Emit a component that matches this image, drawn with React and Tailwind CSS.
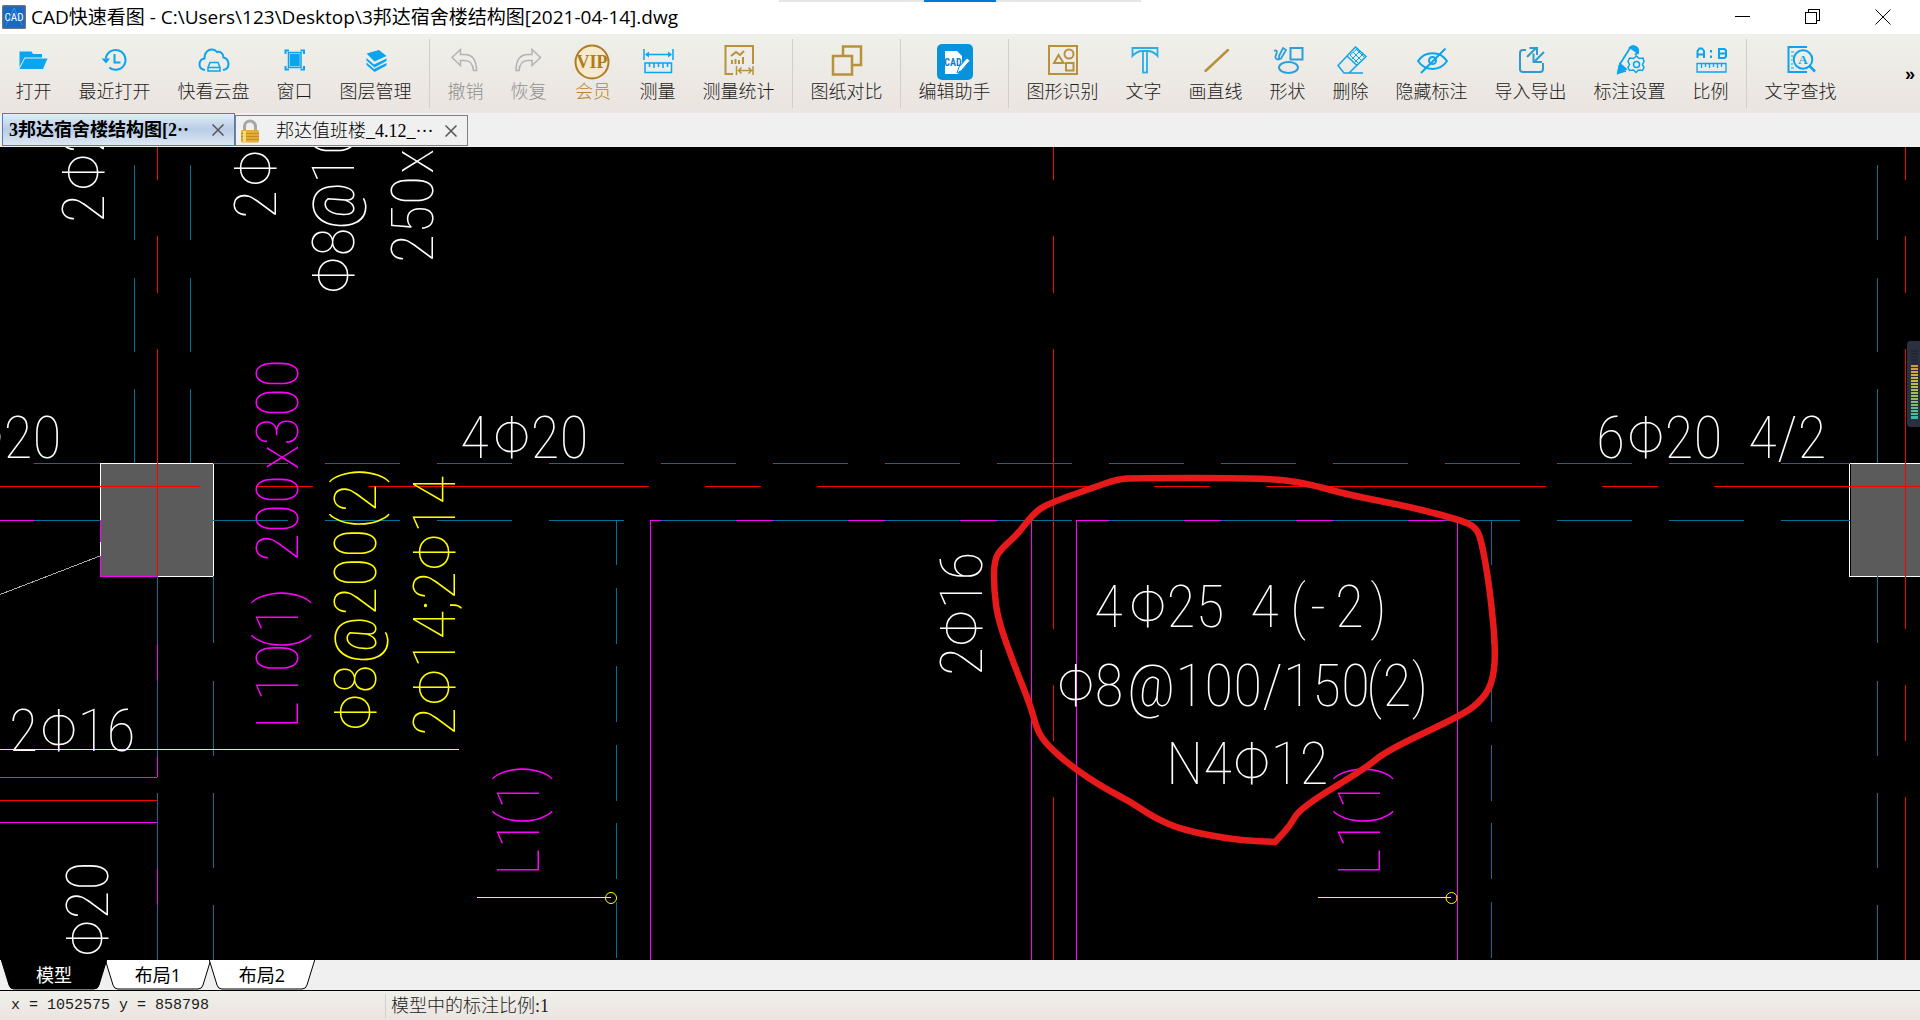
import React, { useState } from "react";

const BLUE = "#0aa5ee";
const GOLD = "#b8923a";

// Toolbar icons, each drawn in a 36x36 box
const icons = {
  open: (
    <g fill={BLUE}>
      <path d="M3.5 25V9.5h12l1.5 2.5h9v3.5H8.5z" />
      <path d="M9 16.5h22.5L27 27H3.5z" />
    </g>
  ),
  recent: (
    <g fill="none" stroke={BLUE} strokeWidth="2">
      <path d="M8.8 16.5a9.9 9.9 0 1 1 3.5 9" />
      <path d="M17.5 12v8.5h6" />
      <path d="M4.5 16.5h8.5l-4 5z" fill={BLUE} stroke="none" />
    </g>
  ),
  cloud: (
    <g fill="none" stroke={BLUE} strokeWidth="2">
      <path d="M9 28C5 27.5 3.5 25 3.5 22.5c0-3 2-5.500 5-6C8.500 10 12.500 7 16.500 7.500c2 .3 3.500 1.200 4.500 2.500 3-1 6.500 1 6.500 5.500 3 .8 5 3.500 5 6.500 0 3-2 5.500-5.500 6" />
      <path d="M14 20.500h8l2 5v3.500H12v-3.500zM12 25.500h12" strokeWidth="1.500" />
    </g>
  ),
  windowIcon: (
    <g fill="none" stroke={BLUE} strokeWidth="1.500">
      <path d="M8.500 12V8.500H12M23.500 8.500H27V12M27 24v3.500h-3.500M12 27.500H8.500V24" strokeWidth="2" />
      <rect x="11.500" y="10.500" width="12.500" height="15" />
      <rect x="13.500" y="12.500" width="8.500" height="11" fill={BLUE} />
    </g>
  ),
  layers: (
    <g fill={BLUE}>
      <path d="M8.500 11.500 21 8l7.500 6-12 5.500z" />
      <path d="m8.500 16 7.500 6.500 12.500-6v2.500L16.500 25.500 8.500 18.500zM8.500 20.500 16 27l12.500-6v2.500L16.500 30 8.500 23z" />
    </g>
  ),
  undo: (
    <path d="M12.500 7.500v5h4c8 0 12 5.500 12 16h-3c-.5-7-3-10-9-10h-4v5l-8.500-8z" fill="none" stroke="#b3b3b3" strokeWidth="1.500" />
  ),
  redo: (
    <path d="M21 7.500v5h-4c-8 0-12 5.500-12 16h3c.5-7 3-10 9-10h4v5l8.500-8z" fill="none" stroke="#b3b3b3" strokeWidth="1.500" />
  ),
  vip: (
    <g>
      <circle cx="17" cy="20" r="16.500" fill="#f5ead0" stroke="#b07c22" strokeWidth="2" />
      <text x="17" y="26" textAnchor="middle" fill="#b07c16" className="font-['Liberation_Serif',serif] text-[18px] font-bold">VIP</text>
    </g>
  ),
  measure: (
    <g fill="none" stroke={BLUE} strokeWidth="1.500">
      <path d="M4 7v11M33 7v11M6 12.500h25" />
      <path d="M5 12.500l4-3v6zM32 12.500l-4-3v6z" fill={BLUE} stroke="none" />
      <rect x="5" y="21" width="26.500" height="9.500" />
      <path d="M9.500 21v4M14 21v5M18.500 21v4M23 21v5M27.500 21v4" />
    </g>
  ),
  measureStat: (
    <g fill="none" stroke={GOLD} strokeWidth="2">
      <path d="M32 22V4H4.500v28H12" />
      <path d="m10 14 5-4 4 3 4-4" />
      <path d="M11 22v-4M14.500 22v-5M18 22v-4M22 22v-7" />
      <path d="M15.500 24v9M32 24v9M17 28.500h14M20.500 25.500l-3 3 3 3M27.500 25.500l3 3-3 3" strokeWidth="1.500" />
    </g>
  ),
  compare: (
    <g fill="none" stroke={GOLD} strokeWidth="2.500">
      <path d="M14 13V4.500h18V23h-8" />
      <rect x="4" y="14" width="19" height="18.500" />
    </g>
  ),
  helper: (
    <g>
      <rect x="0" y="2" width="36" height="36" rx="5" fill="#0793db" />
      <path d="M8 9h12l5 5v8l-4 10H8z" fill="#fff" />
      <text x="16" y="24" textAnchor="middle" fill="#0d7fc4" className="font-['Roboto_Condensed',sans-serif] text-[10px] font-bold">CAD</text>
      <path d="m20 31 2-6 8-9 3 2.500-8.500 10z" fill="#fff" stroke="#0793db" />
    </g>
  ),
  detect: (
    <g fill="none" stroke={GOLD} strokeWidth="2">
      <rect x="4" y="4" width="28" height="28" />
      <path d="M13.500 13 9 21h9.500z" />
      <circle cx="24" cy="12" r="4.500" />
      <rect x="21" y="21" width="7.500" height="7.500" />
    </g>
  ),
  text: (
    <g fill="none" stroke="#27aee8" strokeWidth="1.800">
      <path d="M6.500 6h25v8c-3-3.500-6-5-10-5h-5c-4 0-7 1.500-10 5z" />
      <rect x="17" y="9" width="4" height="21.500" />
    </g>
  ),
  line: <path d="M7.500 29 30 8" stroke={GOLD} strokeWidth="2.500" strokeLinecap="round" />,
  shape: (
    <g fill="none" stroke="#2b9fdb" strokeWidth="2">
      <rect x="20.500" y="6" width="12" height="11.500" />
      <ellipse cx="18.500" cy="25.500" rx="9.500" ry="5.500" />
      <path d="M4 9c4-2 3 2 2 4s-1 4 2 4.500l3-1 5-8.500-3-2-4 8v3.500" strokeWidth="1.800" />
    </g>
  ),
  erase: (
    <g fill="none" stroke={BLUE} strokeWidth="1.500">
      <path d="m22.500 5 10.500 9.500L16 31h-5L5 23.500zM14 14l10 9.500M11 31h19" />
      <path d="m17 13 8 8M20 10l8 8M23 7l8 8M19 17l8-8M22 20l8-8M17 13l8-7" strokeWidth="1" />
    </g>
  ),
  hide: (
    <g fill="none" stroke={BLUE} strokeWidth="2">
      <path d="M4 19c7-10.500 22-10.500 29 0-7 10.500-22 10.500-29 0z" />
      <circle cx="18.500" cy="18.500" r="3.500" />
      <path d="M7 31 31.500 6.500" />
    </g>
  ),
  exchange: (
    <g fill="none" stroke="#2f9bd0" strokeWidth="2">
      <path d="M13 8h-3q-3 0-3 3v16q0 3 3 3h17q3 0 3-3v-6" />
      <path d="m14 15 9-9M16.500 6H24v7M31 10l-9 9M20.500 11.500V20H29" />
    </g>
  ),
  settings: (
    <g fill="none" stroke={BLUE} strokeWidth="1.800">
      <path d="M8 22 18 6c3-3.500 9-.5 8 4l-3 3M14 29l-8 2 1.500-8" />
      <path d="M18 5.500c4-3 9 0 8 5.500zM6 31l2-9 6 5z" fill={BLUE} />
      <path d="m24.500 14 2.500 2.500 4-.5 1 3.500-1.500 3 1.500 3-1.500 3-4-.5-2.500 2.500-2.500-2.500-4 .5-1.500-3 1.500-3-1.500-3 1.500-3.500 4 .5z" strokeWidth="1.500" />
      <circle cx="24.500" cy="22.500" r="3" strokeWidth="1.500" />
    </g>
  ),
  ratio: (
    <g fill="none" stroke={BLUE} strokeWidth="2">
      <path d="M4.500 16V9l2-2.500h2.500l2 2.500v7M4.500 12.500H11M26 7h5.500l1.500 1.500v6L31.500 16H26zM26 11.500h7" />
      <path d="M18 8v2.500M18 13.500V16" />
      <path d="M4 21.500h29V30H4zM8.500 22v4M12.500 22v3M16.500 22v4M20.500 22v3M24.500 22v4M28.500 22v3" strokeWidth="1.300" />
    </g>
  ),
  find: (
    <g fill="none" stroke={BLUE} strokeWidth="2">
      <path d="M24 5H5.500v25H24" />
      <path d="M8 10h3M8 14h2M8 18h1.500M8 22h2M8 26h3" strokeWidth="1" />
      <circle cx="20" cy="17.500" r="9.300" />
      <path d="m26.500 24 5.500 5.500" strokeWidth="2.500" />
      <text x="20" y="22" textAnchor="middle" fill={BLUE} stroke="none" className="font-['Liberation_Serif',serif] text-[13px] font-bold">A</text>
    </g>
  ),
};

const tools = [
  { icon: "open", label: "打开" },
  { icon: "recent", label: "最近打开" },
  { icon: "cloud", label: "快看云盘" },
  { icon: "windowIcon", label: "窗口" },
  { icon: "layers", label: "图层管理" },
  { separator: true },
  { icon: "undo", label: "撤销", disabled: true },
  { icon: "redo", label: "恢复", disabled: true },
  { icon: "vip", label: "会员", gold: true },
  { icon: "measure", label: "测量" },
  { icon: "measureStat", label: "测量统计" },
  { separator: true },
  { icon: "compare", label: "图纸对比" },
  { separator: true },
  { icon: "helper", label: "编辑助手" },
  { separator: true },
  { icon: "detect", label: "图形识别" },
  { icon: "text", label: "文字" },
  { icon: "line", label: "画直线" },
  { icon: "shape", label: "形状" },
  { icon: "erase", label: "删除" },
  { icon: "hide", label: "隐藏标注" },
  { icon: "exchange", label: "导入导出" },
  { icon: "settings", label: "标注设置" },
  { icon: "ratio", label: "比例" },
  { separator: true },
  { icon: "find", label: "文字查找" },
];

const toolWidths = { 2: "w-[63px]", 3: "w-[81px]", 4: "w-[99px]" };

const toolColor = (tool) => {
  if (tool.disabled) return "text-[#8f8f8f]";
  if (tool.gold) return "text-[#b8862b]";
  return "text-[#1c1c1c]";
};

const TitleBar = () => (
  <header className="relative flex h-[34px] shrink-0 items-center bg-white pl-[2px]">
    <div className="absolute top-0 left-1/2 flex h-[2px] w-[362px] -translate-x-1/2 justify-center bg-[#e5e5e5]">
      <div className="w-[72px] bg-[#0078d7]" />
    </div>
    <svg viewBox="0 0 24 24" className="h-6 w-6" aria-hidden="true">
      <rect x="0.500" y="0.500" width="23" height="23" rx="2" fill="#1769c2" stroke="#6e7479" strokeWidth="1.500" />
      <path d="M12 3 4 20M12 3l8 17" stroke="#3f8fe0" />
      <text x="12" y="16" textAnchor="middle" fill="#fff" className="font-['Roboto_Condensed',sans-serif] text-[11px]">CAD</text>
    </svg>
    <h1 className="ml-[5px] flex-1 truncate font-['Open_Sans','Noto_Sans_CJK_SC',sans-serif] text-[19px] leading-6 text-black">
      CAD快速看图 - C:\Users\123\Desktop\3邦达宿舍楼结构图[2021-04-14].dwg
    </h1>
    <div className="flex pr-[2px]">
      <button aria-label="最小化" className="flex h-[34px] w-[70px] items-center justify-center">
        <svg width="16" height="16" stroke="#000" fill="none" shapeRendering="crispEdges"><path d="M0 7.500h15" /></svg>
      </button>
      <button aria-label="还原" className="flex h-[34px] w-[70px] items-center justify-center">
        <svg width="16" height="16" stroke="#000" fill="none" shapeRendering="crispEdges"><path d="M.5 3.500h11v11H.5zM3.500 3V.5h11v11H12" /></svg>
      </button>
      <button aria-label="关闭" className="flex h-[34px] w-[70px] items-center justify-center">
        <svg width="16" height="16" stroke="#000" fill="none"><path d="m.5.5 15 15M15.500.5l-15 15" /></svg>
      </button>
    </div>
  </header>
);

const Toolbar = () => (
  <nav className="flex h-[79px] shrink-0 bg-gradient-to-b from-[#eff0ea] to-[#ebe4e0] pl-[2px]">
    {tools.map((tool, i) =>
      tool.separator ? (
        <div key={i} className="flex w-[9px] shrink-0 justify-center py-[5px]">
          <div className="w-px bg-[#cfcfcb]" />
        </div>
      ) : (
        <button
          key={i}
          disabled={tool.disabled}
          className={`flex shrink-0 flex-col items-center gap-[2px] pt-2 ${tool.gold ? "w-[66px]" : toolWidths[tool.label.length]} ${toolColor(tool)}`}
        >
          <svg width="36" height="36" viewBox="0 0 36 36" className="overflow-visible" aria-hidden="true">
            {icons[tool.icon]}
          </svg>
          <span className="font-['Noto_Sans_CJK_SC',sans-serif] text-[18px] leading-5 font-light whitespace-nowrap">{tool.label}</span>
        </button>
      )
    )}
    <button aria-label="更多" className="ml-auto pr-[5px] font-['Liberation_Sans',sans-serif] text-[18px] leading-5 font-bold text-black">»</button>
  </nav>
);

const CloseIcon = () => (
  <svg width="12" height="12" viewBox="0 0 12 12" stroke="#555" strokeWidth="1.500" aria-hidden="true">
    <path d="m.5.5 11 11M11.500.5l-11 11" />
  </svg>
);

const FileTabs = () => (
  <div className="flex h-[34px] shrink-0 items-end bg-[#f0f0f0] pl-[2px] font-['Liberation_Serif','Noto_Sans_CJK_SC',serif] text-[18px] leading-6 text-black">
    <div className="mb-px flex h-[33px] w-[233px] items-center border border-[#4f7fbb] bg-gradient-to-b from-[#e4ecf6] via-[#b9cde6] to-[#dde8f2] pr-[10px] pl-[6px]">
      <button className="flex-1 overflow-hidden text-left font-bold whitespace-nowrap">3邦达宿舍楼结构图[2··</button>
      <button aria-label="关闭标签"><CloseIcon /></button>
    </div>
    <div className="mb-px flex h-[31px] w-[233px] items-center border border-[#808080] bg-[#f0f0f0] pr-[10px] pl-[4px]">
      <svg width="20" height="24" viewBox="0 0 20 24" aria-hidden="true">
        <path d="M4.500 12V7.500a5.500 5.500 0 0 1 11 0V12" fill="none" stroke="#a6a6a6" strokeWidth="3" />
        <rect x="1" y="11" width="18" height="12.500" rx="1.500" fill="#e5ac3c" />
        <path d="M1 14.500h18M1 17.500h18M1 20.500h18" stroke="#c98a22" />
        <path d="M3 12h3v11H3z" fill="#f8d77f" />
      </svg>
      <button className="ml-[16px] flex-1 overflow-hidden text-left font-light whitespace-nowrap">邦达值班楼_4.12_···</button>
      <button aria-label="关闭标签"><CloseIcon /></button>
    </div>
  </div>
);

// Drawing entities: spans run along the line, from start to end
const AXIS = "#ff0000";
const BEAM = "#007299";
const MAGENTA = "#ff00ff";
const YELLOW = "#ffff00";

const columnDashes = [[576, 643], [681, 756], [793, 868], [905, 960]];
const beamDashes = [[165, 240], [278, 352], [389, 463]];
const wallDashes = [[520, 565], [588, 644], [666, 722], [745, 801], [823, 879], [902, 958]];
const axisDashes = [[147, 180], [236, 293], [349, 629], [685, 741], [797, 960]];
const rowDashes = [[34, 100], [213, 288]];
for (let x = 325; x < 1850; x += 112) rowDashes.push([x, Math.min(x + 75, 1850)]);

const vLines = (x, spans) => spans.map(([a, b]) => `M${x}.5 ${a}V${b}`).join("");
const hLines = (y, spans) => spans.map(([a, b]) => `M${a} ${y}.5H${b}`).join("");

const beamPath =
  vLines(134, beamDashes) + vLines(190, beamDashes) + vLines(1877, beamDashes) +
  vLines(157, columnDashes) + vLines(213, columnDashes) + vLines(1877, columnDashes) +
  vLines(616, wallDashes) + vLines(1491, wallDashes) +
  hLines(463, rowDashes) + hLines(520, rowDashes);

const magentaPath =
  hLines(520, [[0, 34], [650, 1032], [1076, 1458]]) +
  hLines(777, [[0, 157]]) + hLines(822, [[0, 157]]) +
  vLines(650, [[520, 960]]) + vLines(1031, [[520, 960]]) + vLines(1076, [[520, 960]]) + vLines(1457, [[520, 960]]) +
  vLines(157, [[643, 681], [755, 777], [868, 905]]);

const axisPath =
  vLines(157, [[147, 180], [236, 293], [349, 576]]) + vLines(1053, axisDashes) + vLines(1905, axisDashes) +
  hLines(486, [[0, 200], [257, 313], [369, 649], [705, 761], [817, 1097], [1154, 1210], [1266, 1546], [1602, 1658], [1714, 1920]]) +
  hLines(800, [[0, 157]]);

// Every label is a list of words with their start along the baseline
const labels = [
  { y: 458, words: [["Φ20", -34]] },
  { y: 458, words: [["4", 460], ["Φ20", 493]] },
  { y: 458, words: [["6", 1596], ["Φ20", 1627], ["4/2", 1748]] },
  { y: 751, words: [["2", 9], ["Φ16", 40]] },
  { y: 627, words: [["4", 1094], ["Φ25", 1129], ["4", 1250], ["(", 1290], ["-", 1310], ["2", 1335], [")", 1370]] },
  { y: 706, words: [["Φ8", 1057], ["@100/150", 1127], ["(2)", 1366]] },
  { y: 784, words: [["N4", 1166], ["Φ12", 1233]] },
];

const verticalLabels = [
  { x: 104, words: [["2", 223], ["Φ2", 191]] },
  { x: 276, words: [["2", 219], ["Φ2", 187]] },
  { x: 354, words: [["Φ8", 294], ["@", 230], ["10", 184]] },
  { x: 433, words: [["250", 263], ["x", 174]] },
  { x: 108, words: [["Φ20", 957]] },
  { x: 982, words: [["2", 676], ["Φ16", 647]] },
  { x: 298, color: MAGENTA, words: [["L10", 729], ["(1)", 650], ["200", 562], ["x", 470], ["300", 446]] },
  { x: 539, color: MAGENTA, words: [["L1", 876], ["(1)", 826]] },
  { x: 1380, color: MAGENTA, words: [["L1", 876], ["(1)", 826]] },
  { x: 376, color: YELLOW, words: [["Φ8", 731], ["@200", 664], ["(2)", 529]] },
  { x: 455, color: YELLOW, words: [["2", 736], ["Φ14", 706], [";", 611], ["2", 600], ["Φ14", 571]] },
];

// Freehand cloud round the changed beam note
const markup = [
  [1136, 478], [1247, 478], [1285, 480], [1313, 485], [1349, 495], [1411, 507], [1460, 520], [1476, 527], [1482, 543],
  [1490, 590], [1496, 653], [1492, 685], [1479, 703], [1460, 716], [1386, 751], [1366, 768], [1300, 808],
  [1290, 826], [1275, 842], [1275, 842], [1235, 840], [1182, 830], [1153, 817], [1131, 802], [1104, 788],
  [1072, 767], [1047, 745], [1037, 730], [1031, 707], [1015, 667], [998, 620], [994, 590], [994, 560],
  [1002, 548], [1017, 535], [1033, 514], [1047, 504], [1092, 488], [1118, 479],
];
const mid = (a, b) => `${(a[0] + b[0]) / 2} ${(a[1] + b[1]) / 2}`;
const markupPath =
  `M${mid(markup[markup.length - 1], markup[0])}` +
  markup.map((p, i) => `Q${p[0]} ${p[1]} ${mid(p, markup[(i + 1) % markup.length])}`).join("") + "Z";

const DrawingArea = () => (
  <main className="relative min-h-0 flex-1 overflow-hidden bg-black">
    <svg viewBox="0 147 1920 813" preserveAspectRatio="xMinYMin slice" className="block h-full w-full" fill="none">
      <g shapeRendering="crispEdges">
        <rect x="100.500" y="463.500" width="113" height="113" fill="#5b5b5b" stroke="#fff" />
        <rect x="1850.500" y="463.500" width="69" height="113" fill="#5b5b5b" />
        <path d="M1920 463.500h-70.500v113H1920" stroke="#fff" />
        <path d={magentaPath} stroke={MAGENTA} />
        <path d={beamPath} stroke={BEAM} />
        <path d="M100.500 520v22M100.500 556v20.500H157" stroke={MAGENTA} />
        <path d={axisPath} stroke={AXIS} />
        <path d="M0 594.500 100 556" stroke="#aaa" />
        <path d="M0 749.500h459M477 897.500h134M1318 897.500h133" stroke={YELLOW} />
      </g>
      <circle cx="611" cy="898" r="5.500" stroke={YELLOW} />
      <circle cx="1451.500" cy="898" r="5.500" stroke={YELLOW} />
      <g className="font-['Roboto_Condensed',sans-serif] text-[60px] font-thin">
        {labels.map((label, i) => (
          <text key={i} fill="#fff">
            {label.words.map(([word, x]) => (
              <tspan key={x} x={x} y={label.y}>{word}</tspan>
            ))}
          </text>
        ))}
        {verticalLabels.map((label, i) => (
          <text key={i} transform="rotate(-90)" fill={label.color || "#fff"}>
            {label.words.map(([word, y]) => (
              <tspan key={y} x={-y} y={label.x}>{word}</tspan>
            ))}
          </text>
        ))}
      </g>
      <path d={markupPath} stroke="#e61a1a" strokeWidth="6.500" strokeLinejoin="round" />
    </svg>
    {/* Level meter docked to the right edge */}
    <svg width="13" height="86" className="absolute top-[194px] right-0" aria-hidden="true">
      <defs>
        <linearGradient id="meter" x1="0" y1="0" x2="0" y2="1">
          <stop offset="0" stopColor="#d9913f" />
          <stop offset="0.300" stopColor="#c9bd45" />
          <stop offset="0.700" stopColor="#7fc06a" />
          <stop offset="1" stopColor="#35b8a8" />
        </linearGradient>
      </defs>
      <path d="M13 0H3Q0 0 0 4v78q0 4 3 4h10z" fill="#2a3040" />
      <path d="M4 10h7M4 13h7M4 16h7M4 19h7M4 22h7" stroke="#1b202c" />
      <rect x="4" y="24" width="7" height="54" fill="url(#meter)" />
      <path d="M4 26.500h7M4 29.500h7M4 32.500h7M4 35.500h7M4 38.500h7M4 41.500h7M4 44.500h7M4 47.500h7M4 50.500h7M4 53.500h7M4 56.500h7M4 59.500h7M4 62.500h7M4 65.500h7M4 68.500h7M4 71.500h7M4 74.500h7" stroke="#2a3040" />
    </svg>
  </main>
);

const sheets = ["模型", "布局1", "布局2"];

const SheetTabs = () => {
  const [active, setActive] = useState("模型");
  return (
    <div className="flex h-[31px] shrink-0 border-b border-black bg-[#f0f0f0] pl-px">
      {sheets.map((sheet) => (
        <button
          key={sheet}
          onClick={() => setActive(sheet)}
          className={`relative -mr-[2px] h-[30px] w-[106px] font-['Open_Sans','Noto_Sans_CJK_SC',sans-serif] text-[18px] leading-[30px] ${active === sheet ? "z-10 text-white" : "text-black"}`}
        >
          <svg viewBox="0 0 106 30" className="absolute inset-0 h-full w-full" aria-hidden="true">
            <path d="M0-1 8 25q1 4 5 4h80q4 0 5-4l8-26" fill={active === sheet ? "#000" : "#fff"} stroke="#000" />
          </svg>
          <span className="relative">{sheet}</span>
        </button>
      ))}
    </div>
  );
};

const StatusBar = () => (
  <footer className="flex h-[29px] shrink-0 items-center bg-gradient-to-b from-[#eff0ea] to-[#ebe4e0] text-[#1c1c1c]">
    <div className="w-[385px] pl-[11px] font-['Liberation_Mono',monospace] text-[15px] leading-6">x = 1052575 y = 858798</div>
    <div className="border-l border-[#cfcfcb] pl-[5px] font-['Liberation_Serif','Noto_Sans_CJK_SC',serif] text-[18px] leading-6 font-light">模型中的标注比例:1</div>
  </footer>
);

const App = () => {
  return (
    <div className="flex h-screen flex-col overflow-hidden bg-[#f0f0f0]">
      <TitleBar />
      <Toolbar />
      <FileTabs />
      <DrawingArea />
      <SheetTabs />
      <StatusBar />
    </div>
  );
};

export default App;
